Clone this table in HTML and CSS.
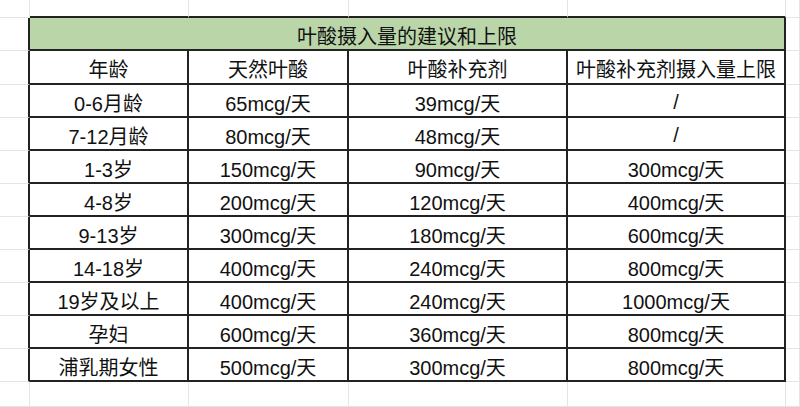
FILE: index.html
```html
<!DOCTYPE html>
<html lang="zh">
<head>
<meta charset="utf-8">
<title>叶酸摄入量的建议和上限</title>
<link rel="stylesheet" href="styles.css">
</head>
<body>
<div class="sheet">
  <!-- row 1 -->
  <div class="g"></div><div class="g tb"></div><div class="g tb"></div><div class="g tb"></div><div class="g tb"></div><div class="g"></div>
  <!-- title -->
  <div class="g lb"></div><div class="c title">叶酸摄入量的建议和上限</div><div class="g"></div>
  <!-- header -->
  <div class="g lb"></div><div class="c">年龄</div><div class="c">天然叶酸</div><div class="c">叶酸补充剂</div><div class="c">叶酸补充剂摄入量上限</div><div class="g"></div>
  <div class="g lb"></div><div class="c">0-6月龄</div><div class="c">65mcg/天</div><div class="c">39mcg/天</div><div class="c">/</div><div class="g"></div>
  <div class="g lb"></div><div class="c">7-12月龄</div><div class="c">80mcg/天</div><div class="c">48mcg/天</div><div class="c">/</div><div class="g"></div>
  <div class="g lb"></div><div class="c">1-3岁</div><div class="c">150mcg/天</div><div class="c">90mcg/天</div><div class="c">300mcg/天</div><div class="g"></div>
  <div class="g lb"></div><div class="c">4-8岁</div><div class="c">200mcg/天</div><div class="c">120mcg/天</div><div class="c">400mcg/天</div><div class="g"></div>
  <div class="g lb"></div><div class="c">9-13岁</div><div class="c">300mcg/天</div><div class="c">180mcg/天</div><div class="c">600mcg/天</div><div class="g"></div>
  <div class="g lb"></div><div class="c">14-18岁</div><div class="c">400mcg/天</div><div class="c">240mcg/天</div><div class="c">800mcg/天</div><div class="g"></div>
  <div class="g lb"></div><div class="c">19岁及以上</div><div class="c">400mcg/天</div><div class="c">240mcg/天</div><div class="c">1000mcg/天</div><div class="g"></div>
  <div class="g lb"></div><div class="c">孕妇</div><div class="c">600mcg/天</div><div class="c">360mcg/天</div><div class="c">800mcg/天</div><div class="g"></div>
  <div class="g lb"></div><div class="c">浦乳期女性</div><div class="c">500mcg/天</div><div class="c">300mcg/天</div><div class="c">800mcg/天</div><div class="g"></div>
  <!-- bottom row -->
  <div class="g"></div><div class="g"></div><div class="g"></div><div class="g"></div><div class="g"></div><div class="g"></div>
</div>
</body>
</html>
```
FILE: styles.css
```css
html, body {
  margin: 0;
  padding: 0;
  background: #ffffff;
}
.sheet {
  width: 800px;
  height: 407px;
  overflow: hidden;
  display: grid;
  grid-template-columns: 30px 159px 160px 219px 218px 14px;
  grid-template-rows: 18px 33px 34px repeat(9, 33px) 25px;
  font-family: "Liberation Sans", "Noto Sans CJK SC", sans-serif;
  font-size: 20px;
  color: #111111;
}
.g {
  box-sizing: border-box;
  border-right: 1px solid #e4e4e4;
  border-bottom: 1px solid #e4e4e4;
}
.g.tb {
  border-bottom: 2px solid #222222;
}
.g.lb {
  border-right: 2px solid #222222;
}
.c {
  box-sizing: border-box;
  border-right: 2px solid #222222;
  border-bottom: 2px solid #222222;
  display: flex;
  align-items: center;
  justify-content: center;
  padding-top: 3px;
  white-space: nowrap;
}
.title {
  grid-column: 2 / 6;
  background: #bad6a9;
}
```
